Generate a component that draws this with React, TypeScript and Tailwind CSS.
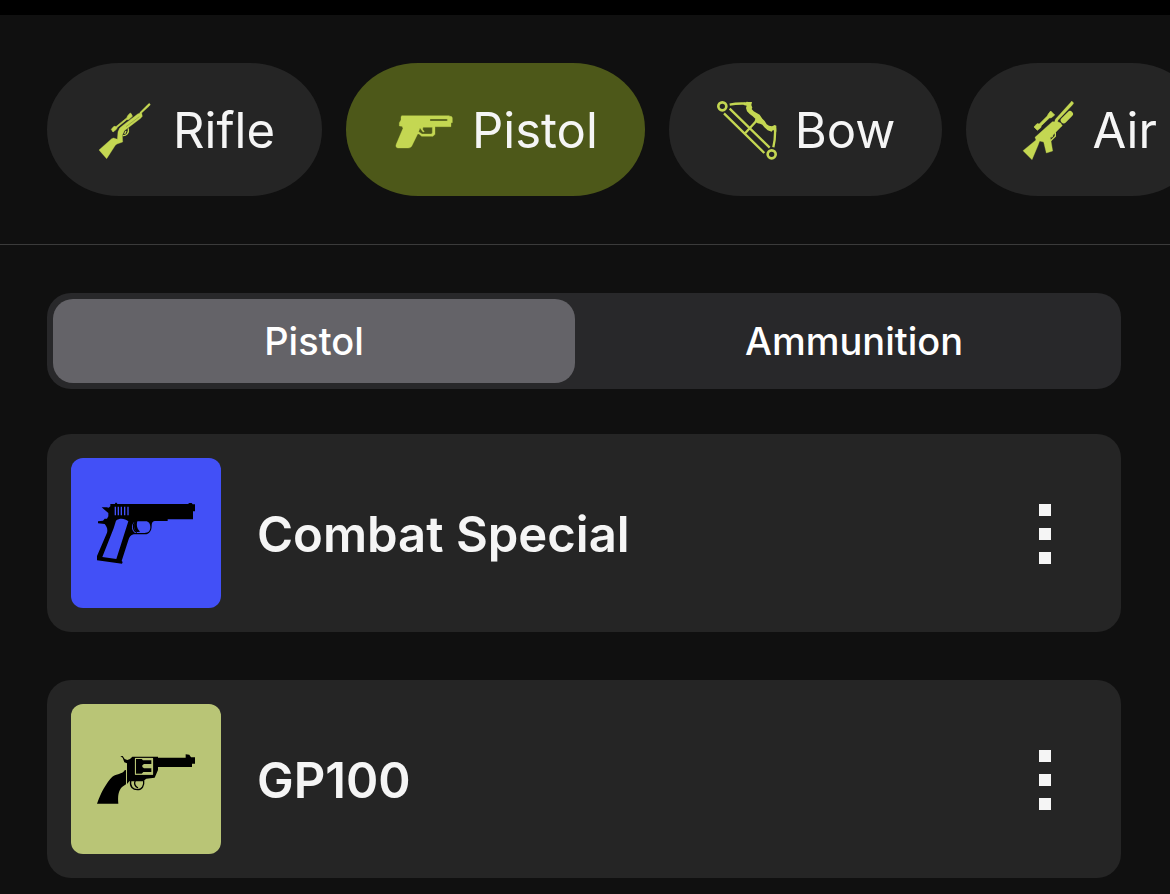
import { useState } from 'react';
import type { ReactNode } from 'react';

interface Category {
  id: string;
  label: string;
  icon: ReactNode;
}

interface Gear {
  id: string;
  name: string;
  color: string;
  icon: ReactNode;
}

function RifleIcon() {
  return (
    <svg viewBox="15 27 180 180" className="size-[60px] shrink-0" fill="currentColor" stroke="currentColor" aria-hidden="true">
      <path strokeWidth="1" d="M27 177 65 143 71 141 82 145 84 122 89 111 101 101 143 69 150 66 150 64 174 40 178 37 181 41 177 46 155 66 157 76 152 82 103 119 97 133 98 153 81 159 76 163 50 203Z" />
      <path strokeWidth="2" d="M64 115 72 106 78 107 111 80 113 74 121 66 124 69 127 76 117 85 110 86 82 109 79 115 69 123Z" />
      <path d="M115 112C118 126 109 135 98 134M108 120 104 129" fill="none" strokeWidth="4" />
      <path d="M108 107 148 77" stroke="#4b5126" strokeWidth="1" />
    </svg>
  );
}

function PistolIcon() {
  return (
    <svg viewBox="24 -3 180 180" className="size-[60px] shrink-0" aria-hidden="true">
      <path
        fill="currentColor"
        fillRule="evenodd"
        stroke="currentColor"
        d="M47 44H190V46H196L199 50V65H195V77H147V100L141 106H107L99 99H95L79 132C76 139 72 141 66 141H37C30 141 28 136 31 129L51 82 48 76 40 75V65L45 57V48ZM132 54V60H184V54ZM102 80 98 92 108 99H136L139 96V79H111L110 85 115 92 111 93 104 84Z"
      />
    </svg>
  );
}

function BowIcon() {
  return (
    <svg viewBox="33 27 180 180" className="size-[60px] shrink-0" fill="none" stroke="currentColor" strokeWidth="7" aria-hidden="true">
      <circle cx="49" cy="46" r="12" strokeWidth="8" />
      <circle cx="197" cy="190" r="12" strokeWidth="8" />
      <path d="M54 67 175 186M71 53 191 170M118 126 153 88" />
      <path d="M71 41C89 37 105 37 124 38M207 112C208 133 206 152 202 169" />
      <path
        fill="currentColor"
        stroke="none"
        d="M113 34 119 35 122 32 128 33 138 33 136 42 139 50 137 54 143 61 152 66 161 71 169 83 176 90 182 100 189 104 198 106 206 102 211 104V122L201 117 197 122 185 118 175 109 169 101 162 98 155 97 146 91 148 83 140 76 131 69 123 61 120 51 122 44 113 42Z"
      />
    </svg>
  );
}

function AirIcon() {
  return (
    <svg viewBox="9 27 180 180" className="size-[60px] shrink-0" fill="currentColor" stroke="currentColor" aria-hidden="true">
      <path strokeWidth="1" d="M72 139 124 92 131 92 133 85 180 33 182 30 188 36 185 41 141 88 140 92 149 96 154 104 149 109 118 140 120 150 125 180 106 186 98 153 86 150 80 166 63 206 36 179 75 147Z" />
      <path strokeWidth="2" d="M69 108 78 98 85 99 109 75 112 69 119 60 131 72 121 80 115 81 91 104 89 110 79 118Z" />
      <path d="M158 88 177 69" strokeWidth="18" strokeLinecap="round" />
      <path d="M133 124 133 136 119 149M126 133 121 139" fill="none" strokeWidth="4" />
    </svg>
  );
}

function SemiAutoIcon() {
  return (
    <svg viewBox="15 15 450 450" className="size-full" aria-hidden="true">
      <path
        fillRule="evenodd"
        d="M133 153H147L148 149H152L154 153H366L370 150H377L380 154H387V175H381V199H305V204H266C259 205 257 210 257 219C257 234 249 244 237 244H203C194 246 190 252 187 262L167 324 170 327 168 332 93 322V309L123 239C126 229 122 220 116 213L96 211V205L111 203 116 197H123L127 190V180L107 163H122L128 164 133 160ZM146 161V187H150V161ZM155 161V187H159V161ZM164 161V187H168V161ZM174 161V187H178V161ZM184 161V187H188V161ZM150 203 143 226 109 312 151 318 187 205C177 196 160 195 150 203ZM204 208C195 217 196 233 207 240H233C247 241 253 234 253 223C253 212 248 205 239 205H214C210 214 213 228 222 236C207 239 201 218 209 208Z"
      />
      <path d="M209 205C199 215 200 233 213 238" fill="none" stroke="#000" strokeWidth="4" />
      <path d="M214 206C208 216 211 229 221 236L213 237C203 228 202 215 210 206Z" />
    </svg>
  );
}

function RevolverIcon() {
  return (
    <svg viewBox="15 15 450 450" className="size-full" aria-hidden="true">
      <path
        fillRule="evenodd"
        d="M163 172 170 171 176 180 184 183 192 180 199 173H276V176H359V166L370 167 375 175H387V194H378V204H276V213L266 236 241 239 231 247H190L183 255V193L175 190 170 176ZM207 177V227H261V177Z"
      />
      <path d="M210 180H227L231 184H256V195H234L229 199V204L234 208H256V219H232L227 224H210Z" />
      <path d="M176 214 180 213V256L168 264C157 276 155 291 157 314H93C104 281 122 250 139 233C151 224 168 227 176 214Z" />
      <path d="M194 246C191 263 201 272 214 272C228 272 235 261 233 244M208 244C203 256 208 263 216 267" fill="none" stroke="#000" strokeWidth="4" />
      <path d="M208 178H260V226H208Z" fill="none" stroke="#b9c576" strokeWidth="2" />
    </svg>
  );
}

const CATEGORIES: Category[] = [
  { id: 'rifle', label: 'Rifle', icon: <RifleIcon /> },
  { id: 'pistol', label: 'Pistol', icon: <PistolIcon /> },
  { id: 'bow', label: 'Bow', icon: <BowIcon /> },
  { id: 'air', label: 'Air', icon: <AirIcon /> },
];

const SEGMENTS = ['Pistol', 'Ammunition'];

const GEAR: Gear[] = [
  { id: 'combat-special', name: 'Combat Special', color: 'bg-[#4250f7]', icon: <SemiAutoIcon /> },
  { id: 'gp100', name: 'GP100', color: 'bg-[#b9c576]', icon: <RevolverIcon /> },
];

function GearCard({ gear }: { gear: Gear }) {
  return (
    <li className="flex items-center rounded-3xl bg-[#252525] p-6">
      <div className={`size-[150px] shrink-0 overflow-hidden rounded-xl ${gear.color}`}>{gear.icon}</div>
      <h2 className="ml-9 min-w-0 flex-1 truncate pt-[3px] text-[49px] leading-[64px] font-semibold">{gear.name}</h2>
      <button
        type="button"
        aria-label={`Options for ${gear.name}`}
        className="flex h-24 w-[104px] shrink-0 flex-col items-center justify-center gap-3 pt-[2px]"
      >
        <span className="size-3 bg-[#f5f5f5]" />
        <span className="size-3 bg-[#f5f5f5]" />
        <span className="size-3 bg-[#f5f5f5]" />
      </button>
    </li>
  );
}

export default function App() {
  const [category, setCategory] = useState('pistol');
  const [segment, setSegment] = useState('Pistol');

  return (
    <div className="min-h-screen overflow-hidden border-t-[15px] border-black bg-[#101010] font-['Inter',sans-serif] text-[#f5f5f5]">
      <nav className="flex gap-6 overflow-hidden border-b border-[#3b3b3b] py-12 pl-[47px]">
        {CATEGORIES.map(c => (
          <button
            key={c.id}
            type="button"
            aria-pressed={category === c.id}
            onClick={() => setCategory(c.id)}
            className={`flex shrink-0 items-center gap-[18px] rounded-[72px/66px] py-[35px] pr-[47px] pl-12 ${
              category === c.id ? 'bg-[#4d5819]' : 'bg-[#252525]'
            }`}
          >
            <span className="text-[#c4d752]">{c.icon}</span>
            <span className="pt-[3px] text-[49px] leading-[60px]">{c.label}</span>
          </button>
        ))}
      </nav>

      <main className="pt-12 pr-[49px] pl-[47px]">
        <div className="flex gap-[18px] rounded-3xl bg-[#28282a] p-[6px]">
          {SEGMENTS.map(s => (
            <button
              key={s}
              type="button"
              aria-pressed={segment === s}
              onClick={() => setSegment(s)}
              className={`h-[84px] flex-1 rounded-[20px] text-[38px] font-medium text-white ${
                segment === s ? 'bg-[#646368]' : ''
              }`}
            >
              {s}
            </button>
          ))}
        </div>

        <ul className="mt-[45px] space-y-12">
          {GEAR.map(g => (
            <GearCard key={g.id} gear={g} />
          ))}
        </ul>
      </main>
    </div>
  );
}
